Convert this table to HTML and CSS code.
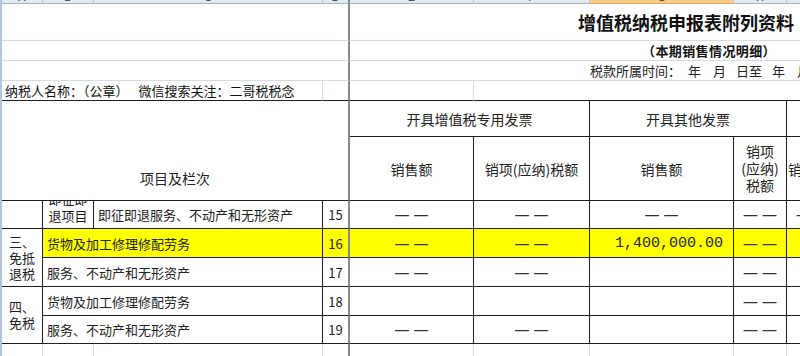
FILE: index.html
```html
<!DOCTYPE html>
<html lang="zh-CN">
<head>
<meta charset="utf-8">
<title>增值税纳税申报表附列资料</title>
<link rel="stylesheet" href="styles.css">
</head>
<body>
<div class="sheet">
  <div class="ch"><span>A</span></div>
  <div class="ch"><span>B</span></div>
  <div class="ch"><span>C</span></div>
  <div class="ch fz"><span>D</span></div>
  <div class="ch"><span>E</span></div>
  <div class="ch"><span>F</span></div>
  <div class="ch sel"><span>G</span></div>
  <div class="ch"><span>H</span></div>
  <div class="ch"><span>I</span></div>

  <div class="c s4 fz"></div>
  <div class="c s5 title">增值税纳税申报表附列资料</div>
  <div class="c s4 fz"></div>
  <div class="c s5 sub">（本期销售情况明细）</div>
  <div class="c s4 fz"></div>
  <div class="c s5 period">税款所属时间：<span class="g1">年</span><span class="g2">月</span><span class="g3">日至</span><span class="g3">年</span><span class="g2">月</span></div>

  <div class="c s3 bb payer"><span>纳税人名称：（公章）</span><span class="wx">微信搜索关注：二哥税税念</span></div>
  <div class="c fz bb"></div>
  <div class="c bb"></div>
  <div class="c s4 bb nr"></div>

  <div class="c s4 r2 fz bb hd item">项目及栏次</div>
  <div class="c s2 br bb hd">开具增值税专用发票</div>
  <div class="c s2 br bb hd">开具其他发票</div>
  <div class="c bb nr"></div>
  <div class="c br bb hd">销售额</div>
  <div class="c br bb hd">销项(应纳)税额</div>
  <div class="c br bb hd">销售额</div>
  <div class="c br bb hd multi">销项<br>(应纳)<br>税额</div>
  <div class="c bb nr hd cut">销售额</div>

  <div class="c br bb"></div>
  <div class="c br bb tall"><div>即征即<br>退项目</div></div>
  <div class="c br bb name narrow">即征即退服务、不动产和无形资产</div>
  <div class="c fz bb num">15</div>
  <div class="c br bb ctr"><span class="dash">－－</span></div>
  <div class="c br bb ctr"><span class="dash">－－</span></div>
  <div class="c br bb ctr"><span class="dash">－－</span></div>
  <div class="c br bb ctr"><span class="dash">－－</span></div>
  <div class="c bb nr ctr"><span class="dash">－－</span></div>

  <div class="c r2 br bb ctr grp">三、<br>免抵<br>退税</div>
  <div class="c s2 br bb name y">货物及加工修理修配劳务</div>
  <div class="c fz bb num y">16</div>
  <div class="c br bb ctr y"><span class="dash">－－</span></div>
  <div class="c br bb ctr y"><span class="dash">－－</span></div>
  <div class="c br bb amt y">1,400,000.00</div>
  <div class="c br bb ctr y"><span class="dash">－－</span></div>
  <div class="c bb nr y"></div>

  <div class="c s2 br bb name">服务、不动产和无形资产</div>
  <div class="c fz bb num">17</div>
  <div class="c br bb ctr"><span class="dash">－－</span></div>
  <div class="c br bb ctr"><span class="dash">－－</span></div>
  <div class="c br bb"></div>
  <div class="c br bb ctr"><span class="dash">－－</span></div>
  <div class="c bb nr"></div>

  <div class="c r2 br bb ctr grp">四、<br>免税</div>
  <div class="c s2 br bb name">货物及加工修理修配劳务</div>
  <div class="c fz bb num">18</div>
  <div class="c br bb"></div>
  <div class="c br bb"></div>
  <div class="c br bb"></div>
  <div class="c br bb ctr"><span class="dash">－－</span></div>
  <div class="c bb nr"></div>

  <div class="c s2 br bb name">服务、不动产和无形资产</div>
  <div class="c fz bb num">19</div>
  <div class="c br bb ctr"><span class="dash">－－</span></div>
  <div class="c br bb ctr"><span class="dash">－－</span></div>
  <div class="c br bb"></div>
  <div class="c br bb ctr"><span class="dash">－－</span></div>
  <div class="c bb nr"></div>

  <div class="c nb"></div>
  <div class="c nb"></div>
  <div class="c nb"></div>
  <div class="c nb fz"></div>
  <div class="c nb"></div>
  <div class="c nb"></div>
  <div class="c nb"></div>
  <div class="c nb"></div>
  <div class="c nb"></div>
</div>
</body>
</html>
```

FILE: styles.css
```css
html, body {
  margin: 0;
  padding: 0;
  background: #ffffff;
}

body {
  width: 800px;
  height: 356px;
  overflow: hidden;
  font-family: "Noto Sans CJK SC", "Noto Sans", sans-serif;
  color: #1c1c1c;
}

.sheet {
  display: grid;
  grid-template-columns: 41px 51px 229px 27px 124px 116px 144px 53px 53px;
  grid-template-rows: 4px 37px 20px 20px 20px 36px 64px 28px 29px 29px 29px 28px 12px;
  border-left: 2px solid #b3c6de;
  width: max-content;
}

/* column header strip */
.ch {
  box-sizing: border-box;
  overflow: hidden;
  background: #e4e9f0;
  border-right: 1px solid #b9c6d6;
  border-bottom: 1px solid #9eb3cc;
}

.ch span {
  display: block;
  margin-top: -8px;
  font-family: "Liberation Sans", sans-serif;
  font-size: 11px;
  line-height: 11px;
  text-align: center;
  color: #253c3a;
}

.ch.sel {
  background: #f9cf8a;
  border-bottom-color: #f0a04a;
}

/* cells */
.c {
  box-sizing: border-box;
  min-width: 0;
  overflow: hidden;
  display: flex;
  align-items: center;
  white-space: nowrap;
  font-size: 13px;
  border-right: 1px solid #d4dbe6;
  border-bottom: 1px solid #d4dbe6;
}

.ch.fz,
.c.fz {
  border-right: 2px solid #8a8a8a;
}

.br { border-right-color: #1f1f1f; }
.bb { border-bottom-color: #1f1f1f; }
.nr { border-right-color: transparent; }
.nb { border-bottom: none; }

.s2 { grid-column: span 2; }
.s3 { grid-column: span 3; }
.s4 { grid-column: span 4; }
.s5 { grid-column: span 5; }
.r2 { grid-row: span 2; }

.y { background: #ffff00; }

.ctr { justify-content: center; }

/* title area */
.title {
  padding-left: 228px;
  font-size: 18px;
  font-weight: 700;
  color: #111;
}

.sub {
  padding-left: 292px;
  font-size: 13px;
  letter-spacing: 0.4px;
  font-weight: 700;
  color: #111;
}

.period {
  padding-left: 240px;
  font-size: 13px;
  color: #222;
}

.g1 { margin-left: 7px; }
.g2 { margin-left: 12px; }
.g3 { margin-left: 10px; }

.payer {
  padding-left: 3px;
  font-size: 13px;
  color: #111;
}

.wx { margin-left: 10px; }

/* header rows */
.hd {
  justify-content: center;
  font-size: 14px;
  color: #222;
}

.item {
  align-items: flex-end;
  padding-bottom: 12px;
}

.multi {
  text-align: center;
  line-height: 17px;
}

.cut {
  justify-content: flex-start;
  padding-left: 1px;
}

/* body rows */
.tall {
  align-items: flex-end;
  justify-content: center;
  padding-bottom: 4px;
}

.tall div {
  text-align: center;
  line-height: 17px;
}

.name {
  padding-left: 4px;
  color: #222;
}

.grp {
  text-align: center;
  line-height: 16px;
  color: #222;
}

.num {
  justify-content: center;
  color: #222;
}

.amt {
  justify-content: flex-end;
  padding-right: 10px;
  font-family: "Liberation Mono", monospace;
  font-size: 15px;
  color: #222;
}

.dash {
  font-size: 19px;
  line-height: 1;
  color: #333;
}
```
